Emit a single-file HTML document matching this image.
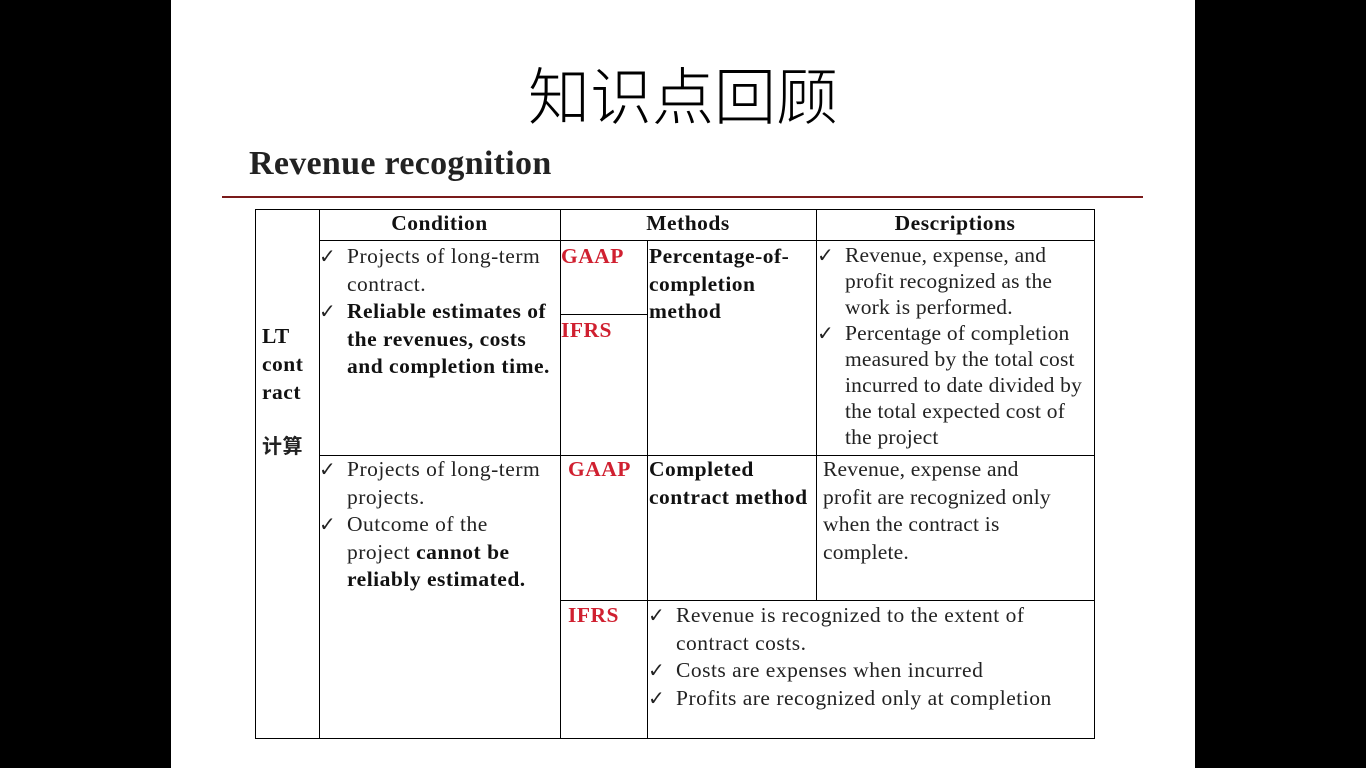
<!DOCTYPE html>
<html><head><meta charset="utf-8"><style>
body{margin:0;width:1366px;height:768px;background:#000;position:relative;overflow:hidden;font-family:"Liberation Serif","Noto Serif CJK SC",serif;}
#s{position:absolute;left:171px;top:0;width:1024px;height:768px;background:#fff;}
.a{position:absolute;}
.h{background:#000;height:1px;position:absolute}
.v{background:#000;width:1px;position:absolute}
.t{position:absolute;font-size:21.5px;letter-spacing:0.5px;line-height:27.5px;color:#222;white-space:nowrap}
.d{letter-spacing:0.2px}
b{font-weight:bold;color:#111}
.r{color:#d02030;font-weight:bold}
.ck{position:absolute;font-family:"DejaVu Sans",sans-serif;font-size:20px;color:#222;line-height:27px}
</style></head><body>
<div id="s"></div>
<div class="a" style="left:0;width:1366px;top:52px;text-align:center;font-size:62px;font-family:'Noto Sans CJK SC',sans-serif;font-weight:300;color:#000;line-height:80px">知识点回顾</div>
<div class="a" style="left:249px;top:145px;font-size:34px;letter-spacing:0.3px;font-weight:bold;color:#222">Revenue recognition</div>
<div class="a" style="left:222px;top:196px;width:921px;height:2px;background:#7a1a1a"></div>

<div class="h" style="left:255px;top:209px;width:840px"></div>
<div class="h" style="left:255px;top:738px;width:840px"></div>
<div class="v" style="left:255px;top:209px;height:530px"></div>
<div class="v" style="left:1094px;top:209px;height:530px"></div>
<div class="v" style="left:319px;top:209px;height:530px"></div>
<div class="v" style="left:560px;top:209px;height:530px"></div>
<div class="v" style="left:647px;top:240px;height:499px"></div>
<div class="v" style="left:816px;top:209px;height:391px"></div>
<div class="h" style="left:319px;top:240px;width:776px"></div>
<div class="h" style="left:319px;top:455px;width:776px"></div>
<div class="h" style="left:560px;top:600px;width:535px"></div>
<div class="h" style="left:560px;top:314px;width:87px"></div>

<div class="t" style="left:319px;width:241px;top:210px;text-align:center"><b>Condition</b></div>
<div class="t" style="left:560px;width:256px;top:210px;text-align:center"><b>Methods</b></div>
<div class="t" style="left:816px;width:278px;top:210px;text-align:center"><b>Descriptions</b></div>

<div class="t" style="left:262px;top:322px;line-height:28px"><b>LT<br>cont<br>ract</b></div>
<div class="t" style="left:262px;top:431px;font-family:'Noto Sans CJK SC',sans-serif;font-weight:bold;font-size:20px">计算</div>

<div class="ck" style="left:319px;top:243px">✓</div>
<div class="t" style="left:347px;top:243px">Projects of long-term<br>contract.</div>
<div class="ck" style="left:319px;top:298px">✓</div>
<div class="t" style="left:347px;top:298px"><b>Reliable estimates of<br>the revenues, costs<br>and completion time.</b></div>
<div class="t r" style="left:561px;top:243px">GAAP</div>
<div class="t r" style="left:561px;top:317px">IFRS</div>
<div class="t" style="left:649px;top:243px"><b>Percentage-of-<br>completion<br>method</b></div>
<div class="ck" style="left:817px;top:242px">✓</div>
<div class="t d" style="left:845px;top:242px;line-height:26px">Revenue, expense, and<br>profit recognized as the<br>work is performed.</div>
<div class="ck" style="left:817px;top:320px">✓</div>
<div class="t d" style="left:845px;top:320px;line-height:26px">Percentage of completion<br>measured by the total cost<br>incurred to date divided by<br>the total expected cost of<br>the project</div>

<div class="ck" style="left:319px;top:456px">✓</div>
<div class="t" style="left:347px;top:456px">Projects of long-term<br>projects.</div>
<div class="ck" style="left:319px;top:511px">✓</div>
<div class="t" style="left:347px;top:511px">Outcome of the<br>project <b>cannot be</b><br><b>reliably estimated.</b></div>
<div class="t r" style="left:568px;top:456px">GAAP</div>
<div class="t" style="left:649px;top:456px"><b>Completed<br>contract method</b></div>
<div class="t d" style="left:823px;top:456px">Revenue, expense and<br>profit are recognized only<br>when the contract is<br>complete.</div>

<div class="t r" style="left:568px;top:602px">IFRS</div>
<div class="ck" style="left:648px;top:602px">✓</div>
<div class="t" style="left:676px;top:602px">Revenue is recognized to the extent of<br>contract costs.</div>
<div class="ck" style="left:648px;top:657px">✓</div>
<div class="t" style="left:676px;top:657px">Costs are expenses when incurred</div>
<div class="ck" style="left:648px;top:685px">✓</div>
<div class="t" style="left:676px;top:685px">Profits are recognized only at completion</div>
</body></html>
